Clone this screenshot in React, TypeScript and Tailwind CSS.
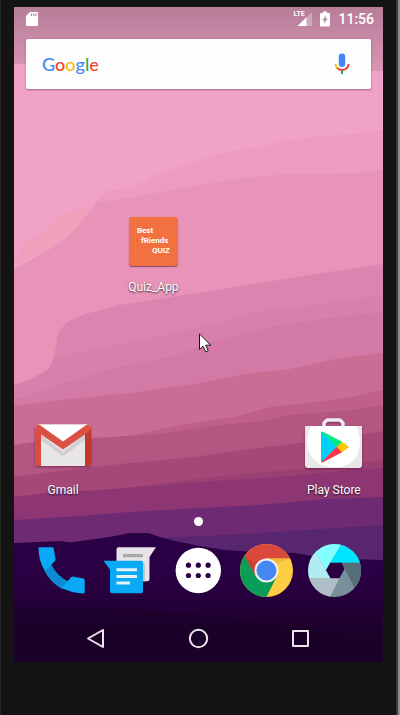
import type { ReactNode } from "react";

function Wallpaper() {
  return (
    <svg
      aria-hidden="true"
      viewBox="14 7 369 655"
      preserveAspectRatio="none"
      className="absolute inset-0 h-full w-full"
    >
      <defs>
        <linearGradient id="ground" x1="0" y1="0" x2="0" y2="1">
          <stop offset="0" stopColor="#2b0046" />
          <stop offset="0.35" stopColor="#2a0043" />
          <stop offset="0.6" stopColor="#230036" />
          <stop offset="0.72" stopColor="#1d002b" />
          <stop offset="1" stopColor="#1c0029" />
        </linearGradient>
        <linearGradient id="scrim" x1="0" y1="0" x2="0" y2="1">
          <stop offset="0" stopColor="#1a1a1a" stopOpacity="0.27" />
          <stop offset="1" stopColor="#1a1a1a" stopOpacity="0.11" />
        </linearGradient>
      </defs>
      <rect x="14" y="7" width="369" height="655" fill="#f0a3c7" />
      <path fill="#ec9cc0" d="M383 130 L345 135 L320 136 L285 141 L260 147 L230 151 L210 156 L185 165 L160 173 L130 188 L108 190 L94 204 L383 210Z" />
      <path fill="#e894b9" d="M383 169 L365 173 L290 174 L245 178 L200 185 L155 193 L132 198 L98 202 L75 228 L50 248 L14 270 L14 400 L383 300Z" />
      <path fill="#f0a0ba" d="M93 205 L72 210 L58 218 L46 229 L30 240 L20 251 L14 265 L20 262 L34 256 L52 248 L66 238 L78 226Z" />
      <path fill="#d985b0" d="M383 264 L310 275 L235 287 L178 296 L120 305 L85 314 L67 322 L58 333 L56 346 L53 360 L48 370 L34 378 L14 385 L14 410 L383 400Z" />
      <path fill="#d780ab" d="M383 295 L330 303 L260 311 L215 324 L165 335 L100 348 L54 358 L50 368 L30 380 L14 386 L14 410 L383 400Z" />
      <path fill="#d27aa5" d="M383 312 L320 319 L265 328 L210 342 L177 355 L120 367 L80 378 L45 390 L14 400 L14 420 L383 400Z" />
      <path fill="#ca6d95" d="M383 353 L335 359 L290 369 L245 374 L195 384 L130 393 L70 399 L14 406 L14 450 L383 420Z" />
      <path fill="#be608a" d="M383 390 L350 397 L325 401 L270 407 L235 417 L180 425 L130 436 L383 430Z" />
      <path fill="#b35682" d="M383 405 L345 411 L290 415 L265 421 L220 425 L160 434 L93 438 L55 439 L14 445 L14 490 L383 450Z" />
      <path fill="#a54878" d="M383 431 L325 440 L250 449 L195 457 L130 463 L75 469 L14 477 L14 510 L383 480Z" />
      <path fill="#9a4072" d="M383 460 L335 466 L290 470 L230 475 L180 481 L110 490 L383 475Z" />
      <path fill="#8d3673" d="M383 468 L330 472 L280 477 L215 481 L165 485 L100 490 L55 492 L14 497 L14 540 L383 520Z" />
      <path fill="#6f2a74" d="M383 497 L325 499 L260 505 L200 508 L130 512 L80 516 L14 520 L14 560 L383 560Z" />
      <path fill="#58266f" d="M383 525 L320 529 L245 534 L160 538 L230 570 L383 580Z" />
      <path fill="url(#ground)" d="M14 543 L40 542 L60 541 L70 542.500 L95 539 L115 536 L130 533 L148 533 L160 537 L175 541 L200 546 L225 550 L255 552 L295 553 L325 558 L350 559 L383 560 L383 662 L14 662Z" />
      <path fill="#1b0028" d="M14 608 L70 608 L150 610 L230 618 L300 628 L383 638 L383 662 L14 662Z" opacity="0.6" />
      <path fill="url(#scrim)" d="M14 7 H383 V71 H200 V64 H14Z" />
    </svg>
  );
}

function SdCard() {
  return (
    <svg aria-hidden="true" viewBox="0 0 12 14" className="h-3.5 w-3">
      <path fill="#fff" d="M4 0 H11 Q12 0 12 1 V13 Q12 14 11 14 H1 Q0 14 0 13 V4Z" />
      <path stroke="#b9869f" strokeWidth="1.200" d="M5.500 1.500V4 M7.800 1.500V4 M10.100 1.500V4" />
    </svg>
  );
}

function Signal() {
  return (
    <svg aria-hidden="true" viewBox="0 0 15 14" className="h-3.5 w-[15px]">
      <path fill="#fff" opacity="0.3" d="M15 0V14H1Z" />
      <path fill="#fff" d="M9.500 5.200V14H0.500Z" />
    </svg>
  );
}

function Battery() {
  return (
    <svg aria-hidden="true" viewBox="0 0 10 16" className="h-4 w-2.5">
      <path fill="#fff" d="M3 0.500H7V2H9Q10 2 10 3V14.500Q10 15.500 9 15.500H1Q0 15.500 0 14.500V3Q0 2 1 2H3Z" />
      <path fill="#b9869f" d="M6 4 L2.300 9.500H4.600L4 13.300 L7.700 7.600H5.500Z" />
    </svg>
  );
}

function Mic() {
  return (
    <svg aria-hidden="true" viewBox="0 0 16 22" className="h-[22px] w-4">
      <rect x="4.800" y="0.500" width="6.400" height="13.500" rx="3.200" fill="#4385f5" />
      <path fill="none" stroke="#fbbc05" strokeWidth="2" d="M1.500 11 Q1.700 14 3.600 15.500" />
      <path fill="none" stroke="#ea4335" strokeWidth="2" d="M3.200 15.100 Q5.200 17 8 17 Q14 16.500 14.600 11" />
      <path stroke="#34a853" strokeWidth="2" d="M8 17.700V21" />
    </svg>
  );
}

function GmailIcon() {
  return (
    <svg aria-hidden="true" viewBox="34 416 58 58" className="h-[58px] w-[58px] drop-shadow-[0_1px_1px_rgba(60,0,50,0.5)]">
      <rect x="35" y="424.500" width="56" height="41.500" rx="3" fill="#e8e6e7" />
      <path fill="#d1cfd1" d="M41 435 L63 452 L85 434 V440 L65 455 Q63 456 61 455 L41 440Z" />
      <path fill="#fff" d="M38 424.500 H88 L63 443Z" />
      <path fill="#dc4b3f" d="M35 428 L41 433 V466 H37.500 Q35 466 35 463.500Z" />
      <path fill="#c1392d" d="M91 428 L85 433 V466 H88.500 Q91 466 91 463.500Z" />
      <path fill="#db5044" d="M35 428.500 Q35 424.500 38.500 424.500 L40.500 425.500 L63 441.500 L85.500 425.500 L87.500 424.500 Q91 424.500 91 428.500 Q91 430.500 88.500 432 L63 449.500 L37.500 432 Q35 430.500 35 428.500Z" />
    </svg>
  );
}

function PlayStoreIcon() {
  return (
    <svg aria-hidden="true" viewBox="305 416 58 58" className="h-[58px] w-[58px] drop-shadow-[0_1px_1px_rgba(60,0,50,0.5)]">
      <path fill="none" stroke="#efedef" strokeWidth="3.500" strokeLinejoin="round" d="M324 427.500 V423 L327 420 H340 L343 423 V427.500" />
      <path fill="#e9e8e9" d="M305 426 H362 V465 Q362 468 359 468 H308 Q305 468 305 465Z" />
      <path fill="#fff" d="M311 426 H356 Q361 434 359.500 448 Q357 461 345 466 Q333 469 322 465 Q309 459 307.500 446 Q306.500 434 311 426Z" />
      <path fill="#00d0fe" d="M321 433 Q321 431 323 432 L337 447 L323 462 Q321 463 321 461Z" />
      <path fill="#00ec7c" d="M321.500 431.800 Q322 431.500 323.500 432 L342.500 442 L337 447.500Z" />
      <path fill="#ff3347" d="M321.500 462.300 Q322 463 323.500 462 L342.500 452 L337 446.500Z" />
      <path fill="#ffc800" d="M342 441.800 L348 446 Q349.500 447 348 448 L342 452.300 L336.800 447Z" />
    </svg>
  );
}

function QuizIcon() {
  return (
    <span
      aria-hidden="true"
      className="flex h-[49px] w-[49px] flex-col rounded-[3px] bg-[#f27141] px-2 pt-[9px] text-left text-[8px] leading-[10px] font-bold text-white shadow-[0_1px_1px_rgba(90,20,70,0.6)]"
    >
      <span>Best</span>
      <span className="pl-1">fRiends</span>
      <span className="self-end">QUIZ</span>
    </span>
  );
}

function PhoneIcon() {
  return (
    <svg aria-hidden="true" viewBox="35 543 55 55" className="h-[55px] w-[55px]">
      <path fill="#0a8bd3" d="M44 570 L51 564 Q57 576 69 582 L62 589 Q50 582 44 570Z" />
      <path fill="#0aa9f5" d="M39 547.300 H52.500 Q53.500 547.300 53.600 548.300 L55.600 559.500 Q55.700 560.300 55 561 L45 571 Q38.500 561 38.500 548 Q38.500 547.300 39 547.300Z" />
      <path fill="#0aa9f5" d="M61.500 588 L71 577.300 Q71.700 576.500 72.700 576.600 L83.500 578.600 Q84.700 578.800 84.700 580 V592.500 Q84.700 593.500 83.700 593.500 Q72 593 61.500 588Z" />
    </svg>
  );
}

function MessagesIcon() {
  return (
    <svg aria-hidden="true" viewBox="103 543 55 55" className="h-[55px] w-[55px]">
      <path fill="#e6e4e6" d="M118.500 547.300 H156 L149.500 557 V579 Q149.500 581.300 147.200 581.300 H118.500 Q116.500 581.300 116.500 579 V549.500 Q116.500 547.300 118.500 547.300Z" />
      <path fill="#c8c6c8" d="M143 562 L145 564 V581.300 H143Z" />
      <rect x="123" y="554" width="20" height="3.200" fill="#aaa8aa" />
      <path fill="#0aa9f5" d="M103.500 560.700 H141 Q143 560.700 143 562.700 V591 Q143 593.300 141 593.300 H112.300 Q110 593.300 110 591 V569.500Z" />
      <path stroke="#e6f2fa" strokeWidth="3" d="M116.500 569.700H137 M116.500 576.400H137 M116.500 583.100H130" />
    </svg>
  );
}

function AppsIcon() {
  return (
    <svg aria-hidden="true" viewBox="171 543 55 55" className="h-[55px] w-[55px]">
      <circle cx="198.300" cy="570.500" r="22.700" fill="#fff" />
      <g fill="#2a0043">
        <circle cx="188.500" cy="565.200" r="2.600" />
        <circle cx="198.300" cy="565.200" r="2.600" />
        <circle cx="208.100" cy="565.200" r="2.600" />
        <circle cx="188.500" cy="575.500" r="2.600" />
        <circle cx="198.300" cy="575.500" r="2.600" />
        <circle cx="208.100" cy="575.500" r="2.600" />
      </g>
    </svg>
  );
}

function ChromeIcon() {
  return (
    <svg aria-hidden="true" viewBox="239 543 55 55" className="h-[55px] w-[55px]">
      <defs>
        <clipPath id="chrome-disc">
          <circle cx="266.500" cy="570.500" r="26.500" />
        </clipPath>
      </defs>
      <g clipPath="url(#chrome-disc)">
        <rect x="239" y="543" width="55" height="55" fill="#ffcd41" />
        <path fill="#f2b93b" d="M266 558 H291 L276 564Z" />
        <path fill="#0b9d58" d="M239 543 L256 576 L266 582 L277.500 575 L266 598 H239Z" />
        <path fill="#0a8a4e" d="M255 576 L266 582.500 L276.500 578 L271 586Z" opacity="0.5" />
        <path fill="#da483b" d="M239 543 H294 V558.300 H266.500 L255.500 576 L244.500 556Z" />
        <path fill="#b73a2f" d="M245 556 L254 563 L255 575Z" opacity="0.55" />
      </g>
      <circle cx="266.500" cy="570.500" r="12" fill="#f2f2f2" />
      <circle cx="266.500" cy="570.500" r="10" fill="#4687f4" />
    </svg>
  );
}

function CameraIcon() {
  return (
    <svg aria-hidden="true" viewBox="307 543 55 55" className="h-[55px] w-[55px]">
      <defs>
        <clipPath id="camera-disc">
          <circle cx="334.600" cy="570.500" r="26.500" />
        </clipPath>
      </defs>
      <g clipPath="url(#camera-disc)">
        <rect x="307" y="543" width="55" height="55" fill="#78909c" />
        <path fill="#00e5ff" d="M341.500 543 L330 562.700 H364 V543Z" />
        <path fill="#566e7a" d="M341.700 562.700 H364 V607Z" />
        <path fill="#b0bec5" d="M339.500 578 H305 V600 H328.500Z" />
        <path fill="#b2ebf2" d="M330.500 578 H305 V545 L311.500 545Z" />
        <path fill="#84ffff" d="M342 543 L330 562.700 L326 570.300 L311.500 545 V540Z" />
      </g>
      <path fill="#2a0043" d="M326 570.300 L330.300 562.700 H341.700 L344.500 569 L339.400 578.200 H330.500Z" />
    </svg>
  );
}

function AppShortcut({ label, place, children }: { label: string; place: string; children: ReactNode }) {
  return (
    <button
      type="button"
      className={`flex flex-col items-center justify-center gap-2 ${place}`}
    >
      <span className="flex h-[58px] items-center justify-center">{children}</span>
      <span className="text-[12px] leading-4 whitespace-nowrap text-white [text-shadow:0_1px_2px_rgba(0,0,0,0.75)]">
        {label}
      </span>
    </button>
  );
}

const dock = [
  { name: "Phone", icon: <PhoneIcon /> },
  { name: "Messages", icon: <MessagesIcon /> },
  { name: "All apps", icon: <AppsIcon /> },
  { name: "Chrome", icon: <ChromeIcon /> },
  { name: "Camera", icon: <CameraIcon /> },
];

const navigation = [
  { name: "Back", shape: <path d="M19 4 V21 L4 12.500Z" /> },
  { name: "Home", shape: <circle cx="12.500" cy="12.500" r="8.700" /> },
  { name: "Recent apps", shape: <rect x="5" y="5" width="15" height="15" /> },
];

export default function App() {
  return (
    <div className="relative flex min-h-screen flex-col border-r-2 border-[#8c8c8c] bg-[#141414] pt-[7px] pr-[15px] pb-[53px] pl-3.5 font-[Roboto,sans-serif] shadow-[inset_-2px_0_0_#3a3a3a,inset_1px_0_0_#242424]">
      <main className="relative isolate flex flex-1 flex-col overflow-hidden">
        <Wallpaper />
        <header className="relative flex h-6 items-center pr-[9px] pl-3 text-white">
          <SdCard />
          <span className="ml-auto flex items-center">
            <span className="relative mr-2 flex pl-1">
              <span className="absolute -top-px left-0 text-[7px] leading-[7px] font-bold">LTE</span>
              <Signal />
            </span>
            <Battery />
            <time className="ml-2 text-sm font-medium">11:56</time>
          </span>
        </header>

        <search className="relative mx-3 mt-2 flex h-[50px] items-center justify-between rounded-[2px] bg-[#fdfdfd] pr-[21px] pl-4 shadow-[0_1px_2px_rgba(90,30,70,0.5)]">
          <button type="button" className="flex-1 text-left font-[Lato,sans-serif] text-lg leading-6 font-medium text-[#4285f4]">
            G<span className="text-[#ea4335]">o</span>
            <span className="text-[#fbbc05]">o</span>g<span className="text-[#34a853]">l</span>
            <span className="text-[#ea4335]">e</span>
          </button>
          <button type="button" aria-label="Voice search">
            <Mic />
          </button>
        </search>

        <section aria-label="Home screen" className="relative mt-3 grid flex-1 grid-cols-4 grid-rows-4 px-1">
          <AppShortcut label="Quiz_App" place="col-start-2 row-start-2">
            <QuizIcon />
          </AppShortcut>
          <AppShortcut label="Gmail" place="col-start-1 row-start-4">
            <GmailIcon />
          </AppShortcut>
          <AppShortcut label="Play Store" place="col-start-4 row-start-4">
            <PlayStoreIcon />
          </AppShortcut>
        </section>

        <div className="relative flex h-[22px] items-end justify-center pb-1">
          <span className="h-[9px] w-[9px] rounded-full bg-white" />
        </div>

        <section aria-label="Favorites" className="relative grid h-20 grid-cols-5 items-center px-3.5">
          {dock.map((app) => (
            <button key={app.name} type="button" aria-label={app.name} className="flex justify-center">
              {app.icon}
            </button>
          ))}
        </section>

        <nav aria-label="System" className="relative mt-1 grid h-12 grid-cols-3 items-center px-[31px]">
          {navigation.map((item) => (
            <button key={item.name} type="button" aria-label={item.name} className="flex justify-center">
              <svg
                aria-hidden="true"
                viewBox="0 0 25 25"
                fill="none"
                stroke="#ebe6ec"
                strokeWidth="2"
                strokeLinejoin="round"
                className="h-[25px] w-[25px]"
              >
                {item.shape}
              </svg>
            </button>
          ))}
        </nav>
      </main>

      <svg
        aria-hidden="true"
        viewBox="0 0 13 20"
        className="pointer-events-none absolute top-[333px] left-[199px] h-5 w-[13px]"
      >
        <path
          fill="#fff"
          stroke="#1b1020"
          strokeLinejoin="round"
          d="M0.500 0.800 V16.500 L4 13.200 L6.700 18.800 L9.200 17.700 L6.700 12.200 H11.700Z"
        />
      </svg>
    </div>
  );
}
